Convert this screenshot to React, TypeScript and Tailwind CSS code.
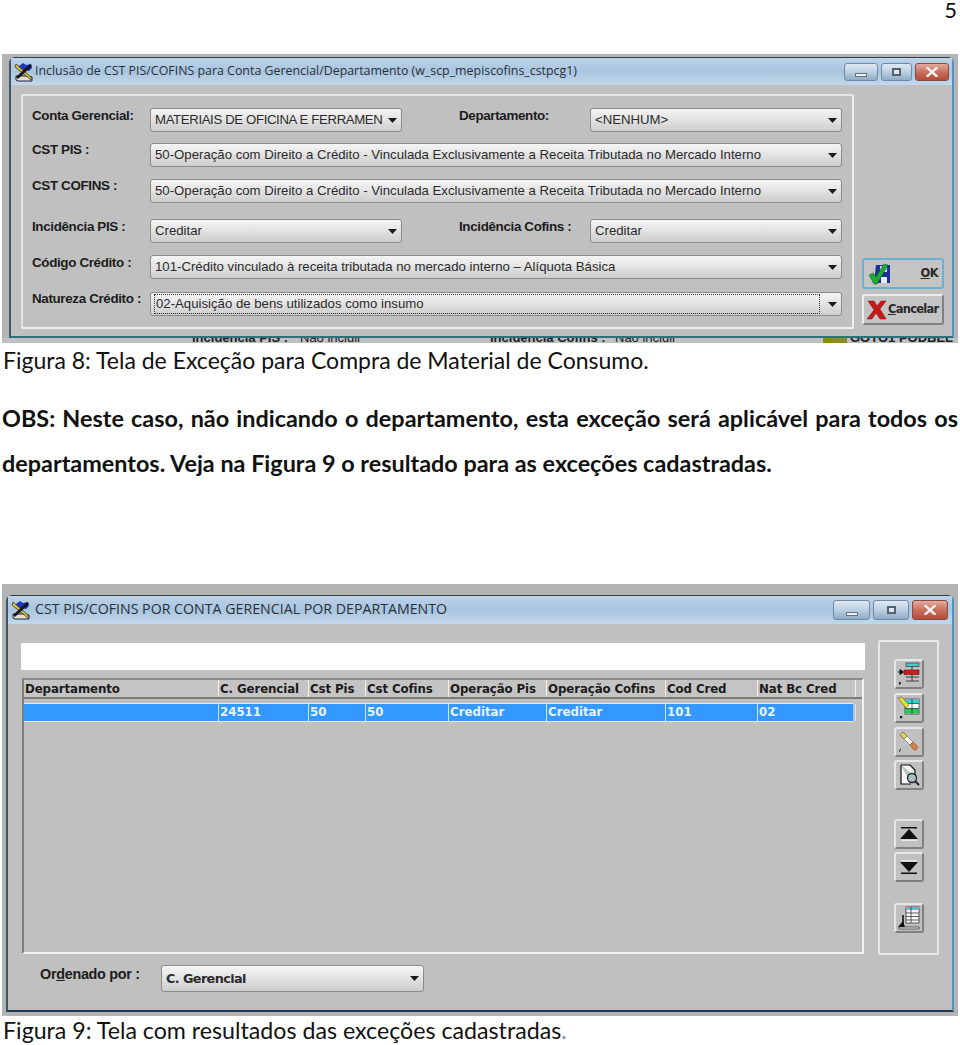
import type { ReactNode } from "react";

const ui = "font-['Liberation_Sans',Arial,sans-serif]";
const verdana = "font-['DejaVu_Sans',Verdana,sans-serif]";

function Arrow() {
  return (
    <svg width="9" height="5" viewBox="0 0 9 5" className="shrink-0">
      <path d="M0 0h9L4.5 5z" fill="#1a1a1a" />
    </svg>
  );
}

function Select({
  text,
  className,
  focused,
  bold,
  textClass,
}: {
  text: string;
  className: string;
  focused?: boolean;
  bold?: boolean;
  textClass?: string;
}) {
  return (
    <div
      className={`flex items-center justify-between h-[24px] pl-[4px] pr-[4px] rounded-[3px] border border-[#8c8c8c] bg-gradient-to-b from-[#f5f5f5] via-[#e2e2e2] to-[#cdcdcd] ${className}`}
    >
      <span
        className={`flex-1 whitespace-nowrap leading-[18px] text-[#2b2b2b] ${
          bold ? `${verdana} font-bold text-[12.8px] tracking-[-0.6px]` : "text-[13.2px]"
        } ${focused ? "border border-dotted border-[#333] mr-[8px] -ml-[1px] pl-[1px]" : ""} ${textClass ?? ""}`}
      >
        {text}
      </span>
      <Arrow />
    </div>
  );
}

function Label({ children, className }: { children: ReactNode; className: string }) {
  return (
    <span className={`font-bold text-[13.4px] leading-[16px] tracking-[-0.35px] text-[#1c1c1c] whitespace-nowrap ${className}`}>
      {children}
    </span>
  );
}

function AppIcon() {
  return (
    <svg width="20" height="20" viewBox="0 0 20 20" className="shrink-0">
      <path d="M5 4l4-3 3 2 5-1 1 4-3 3-4-1-3 1-3-2z" fill="#1f35c4" />
      <path d="M2 14h12l4 1v4H4l-2-1z" fill="#e6e2cc" stroke="#1a2036" strokeWidth="1" />
      <path d="M2 2l16 14-1 2L1 5z" fill="#d9bf2a" stroke="#222" strokeWidth="0.7" />
      <path d="M16 2l2 2L4 17l-2-2z" fill="#181818" />
    </svg>
  );
}

function WinControls({ min, max, close, h }: { min: string; max: string; close: string; h: string }) {
  return (
    <div className="flex gap-[3px]">
      <div className={`${min} ${h} flex items-end justify-center pb-[3px] rounded-[3px] border border-[#6f8ba6] bg-gradient-to-b from-[#dfe9f3] via-[#bcd0e3] to-[#8fabc4]`}>
        <div className="w-[12px] h-[4px] bg-[#eef2f5] border border-[#66737f]" />
      </div>
      <div className={`${max} ${h} flex items-center justify-center rounded-[3px] border border-[#6f8ba6] bg-gradient-to-b from-[#dfe9f3] via-[#bcd0e3] to-[#8fabc4]`}>
        <div className="w-[9px] h-[8px] border-2 border-[#55626e] bg-[#dfe6ec]" />
      </div>
      <div className={`${close} ${h} flex items-center justify-center rounded-[3px] border border-[#8a4a40] bg-gradient-to-b from-[#e5a99c] via-[#c8705e] to-[#b54a36]`}>
        <svg width="14" height="10" viewBox="0 0 14 10">
          <path d="M2.5 1l9 8M11.5 1l-9 8" stroke="#f0f0f0" strokeWidth="2.4" strokeLinecap="square" />
        </svg>
      </div>
    </div>
  );
}

function Titlebar({
  title,
  className,
  titleClass,
  controls,
}: {
  title: string;
  className: string;
  titleClass: string;
  controls: ReactNode;
}) {
  return (
    <div className={`flex items-center justify-between bg-gradient-to-b from-[#bcd3e8] via-[#a9c5df] to-[#c2d8ea] ${className}`}>
      <div className="flex items-center">
        <AppIcon />
        <span className={`font-['Open_Sans',sans-serif] text-[#2a3038] whitespace-nowrap ${titleClass}`}>{title}</span>
      </div>
      {controls}
    </div>
  );
}

function ToolButton({ children, className }: { children: ReactNode; className: string }) {
  return (
    <div className={`w-[30px] h-[30px] flex items-center justify-center rounded-[3px] border-2 border-t-[#e6e6e6] border-l-[#e6e6e6] border-r-[#808080] border-b-[#808080] bg-[#c0c0c0] ${className}`}>
      {children}
    </div>
  );
}

function FirstWindow() {
  return (
    <div className="mx-[2px] h-[289px] bg-[#b4b4b4] pt-[3px] pl-[7px] flex flex-col overflow-hidden">
      <div className="w-[945px] h-[281px] shrink-0 flex flex-col bg-[#c0c0c0] border-t border-l-2 border-r-2 border-b-2 border-t-[#33404c] border-l-[#3c5568] border-r-[#4f93c4] border-b-[#2e6f80] rounded-t-[6px]">
        <Titlebar
          title="Inclusão de CST PIS/COFINS para Conta Gerencial/Departamento (w_scp_mepiscofins_cstpcg1)"
          className="h-[27px] pl-[3px] pr-[3px]"
          titleClass="text-[12.4px] ml-[1px]"
          controls={<WinControls min="w-[34px]" max="w-[31px]" close="w-[34px]" h="h-[18px]" />}
        />
        <div className="flex flex-1 pl-[10px] pt-[9px]">
          <div className="w-[833px] h-[235px] shrink-0 border-2 border-t-[#e4e4e4] border-l-[#e4e4e4] border-b-[#f0f0f0] border-r-[#f0f0f0] rounded-[2px] pl-[9px]">
            <div className="flex items-start mt-[12px]">
              <Label className="w-[118px]">Conta Gerencial:</Label>
              <Select text="MATERIAIS DE OFICINA E FERRAMEN" className="w-[252px]" textClass="tracking-[-0.36px]" />
              <Label className="w-[131px] ml-[57px]">Departamento:</Label>
              <Select text="<NENHUM>" className="w-[252px]" />
            </div>
            <div className="flex items-start mt-[11px]">
              <Label className="w-[118px] -mt-[1px]">CST PIS :</Label>
              <Select text="50-Operação com Direito a Crédito - Vinculada Exclusivamente a Receita Tributada no Mercado Interno" className="w-[692px]" />
            </div>
            <div className="flex items-start mt-[12px]">
              <Label className="w-[118px] -mt-[1px]">CST COFINS :</Label>
              <Select text="50-Operação com Direito a Crédito - Vinculada Exclusivamente a Receita Tributada no Mercado Interno" className="w-[692px]" />
            </div>
            <div className="flex items-start mt-[16px]">
              <Label className="w-[118px]">Incidência PIS :</Label>
              <Select text="Creditar" className="w-[252px]" />
              <Label className="w-[131px] ml-[57px]">Incidência Cofins :</Label>
              <Select text="Creditar" className="w-[252px]" />
            </div>
            <div className="flex items-start mt-[12px]">
              <Label className="w-[118px]">Código Crédito :</Label>
              <Select text="101-Crédito vinculado à receita tributada no mercado interno – Alíquota Básica" className="w-[692px]" />
            </div>
            <div className="flex items-start mt-[13px]">
              <Label className="w-[118px] -mt-[1px]">Natureza Crédito :</Label>
              <Select text="02-Aquisição de bens utilizados como insumo" className="w-[692px]" focused />
            </div>
          </div>
          <div className="ml-[8px] pt-[164px] flex flex-col gap-[5px]">
            <div className="w-[82px] h-[31px] flex items-center justify-between pl-[4px] pr-[4px] rounded-[3px] border-2 border-[#6bb0d2] bg-[#c4c4c4]">
              <svg width="24" height="22" viewBox="0 0 24 22">
                <path d="M8 2h14v18H6z" fill="#1c2f96" />
                <rect x="12" y="3" width="7" height="6" fill="#cdd6ea" />
                <rect x="13" y="14" width="6" height="6" fill="#e6eaf2" />
                <path d="M1 12l4-2 3 4 8-13 4 1-11 19H6z" fill="#22a838" stroke="#0f6a1e" strokeWidth="0.6" />
              </svg>
              <span className={`${verdana} font-bold text-[11.5px] tracking-[-0.6px] text-[#2a2a2a]`}>
                <span className="underline">O</span>K
              </span>
            </div>
            <div className="w-[82px] h-[31px] flex items-center gap-[1px] pl-[3px] rounded-[3px] border-2 border-t-[#ececec] border-l-[#ececec] border-r-[#808080] border-b-[#808080] bg-[#c4c4c4]">
              <svg width="20" height="20" viewBox="0 0 20 20" className="shrink-0">
                <path d="M1 1h6l3 5 4-5h5l-6 8 6 10h-6l-4-6-4 6H0l7-9z" fill="#c91818" stroke="#7a1010" strokeWidth="0.5" />
              </svg>
              <span className={`${verdana} font-bold text-[11.5px] tracking-[-0.75px] text-[#2a2a2a]`}>
                <span className="underline">C</span>ancelar
              </span>
            </div>
          </div>
        </div>
      </div>
      <div className="h-[5px] overflow-hidden flex text-[13px] font-bold text-[#222] leading-[13px] pl-[190px] bg-[#c0c0c0] -ml-[7px]">
        <span className="-mt-[7px] w-[108px]">Incidência PIS :</span>
        <span className="-mt-[7px] w-[190px] font-normal">Não incidir</span>
        <span className="-mt-[7px] w-[125px]">Incidência Cofins :</span>
        <span className="-mt-[7px] w-[208px] font-normal">Não incidir</span>
        <span className="w-[24px] h-[5px] bg-[#8d8a1c]" />
        <span className="-mt-[7px] ml-[3px]">GOTO1 PODBEL</span>
      </div>
    </div>
  );
}

const columns = [
  { title: "Departamento", value: "", width: "w-[195px]" },
  { title: "C. Gerencial", value: "24511", width: "w-[90px]" },
  { title: "Cst Pis", value: "50", width: "w-[57px]" },
  { title: "Cst Cofins", value: "50", width: "w-[83px]" },
  { title: "Operação Pis", value: "Creditar", width: "w-[98px]" },
  { title: "Operação Cofins", value: "Creditar", width: "w-[119px]" },
  { title: "Cod Cred", value: "101", width: "w-[92px]" },
  { title: "Nat Bc Cred", value: "02", width: "w-[98px]" },
];

function SecondWindow() {
  return (
    <div className="mx-[2px] h-[432px] bg-[#b4b4b4] pt-[11px] pl-[4px] flex flex-col overflow-hidden">
      <div className="w-[948px] h-[417px] shrink-0 flex flex-col bg-[#c0c0c0] border-t border-l-2 border-r-2 border-b-2 border-t-[#33404c] border-l-[#3c5568] border-r-[#4f93c4] border-b-[#1d3a4c] rounded-t-[6px]">
        <Titlebar
          title="CST PIS/COFINS POR CONTA GERENCIAL POR DEPARTAMENTO"
          className="h-[28px] pl-[3px] pr-[4px]"
          titleClass="text-[14.2px] ml-[4px] -mt-[2px]"
          controls={<WinControls min="w-[37px]" max="w-[36px]" close="w-[36px]" h="h-[20px]" />}
        />
        <div className="flex pl-[13px] pt-[16px]">
          <div className="w-[844px] shrink-0 pt-[3px]">
            <div className="h-[27px] bg-white" />
            <div className="mt-[8px] ml-[1px] w-[842px] h-[276px] border-2 border-t-[#8a8a8a] border-l-[#7c7c7c] border-b-[#f2f2f2] border-r-[#f2f2f2]">
              <div className="flex h-[19px] bg-[#c4c4c4] border-b-2 border-[#7c7c7c]">
                {columns.map((col) => (
                  <div
                    key={col.title}
                    className={`${col.width} shrink-0 ${verdana} font-bold text-[11.8px] leading-[18px] tracking-[-0.1px] pl-[1px] border-r border-[#eeeeee] text-[#1b1b1b] whitespace-nowrap overflow-hidden`}
                  >
                    {col.title}
                  </div>
                ))}
              </div>
              <div className="flex h-[19px] mt-[4px] w-[829px] bg-[#3399ff] border-y border-[#dfeaf5]">
                {columns.map((col) => (
                  <div
                    key={col.title}
                    className={`${col.width} shrink-0 ${verdana} font-bold text-[11.8px] leading-[17px] pl-[1px] border-r border-[#cfe4fa] text-[#e8f2ff] whitespace-nowrap overflow-hidden`}
                  >
                    {col.value}
                  </div>
                ))}
              </div>
            </div>
          </div>
          <div className="ml-[13px] w-[61px] h-[315px] flex flex-col items-center pt-[17px] border-2 border-[#e8e8e8] rounded-[2px]">
            <ToolButton className="">
              <svg width="24" height="24" viewBox="0 0 24 24">
                <rect x="9" y="1" width="13" height="3.5" fill="#49c9c9" stroke="#222" strokeWidth="0.6" />
                <path d="M15 4v15M9 15h13M9 19h13" stroke="#222" strokeWidth="0.8" fill="none" />
                <path d="M1 10h3M3 7.5l3.5 2.5L3 12.5z" fill="#111" stroke="#111" />
                <rect x="7" y="8" width="15" height="4.5" fill="#c91f1f" stroke="#5d0c0c" strokeWidth="0.6" />
                <rect x="2" y="20" width="1.6" height="2.5" fill="#111" />
              </svg>
            </ToolButton>
            <ToolButton className="mt-[4px]">
              <svg width="24" height="24" viewBox="0 0 24 24">
                <rect x="8" y="3" width="14" height="15" fill="#fff" stroke="#222" strokeWidth="0.7" />
                <rect x="8" y="3" width="14" height="4" fill="#49c9c9" />
                <rect x="8" y="12.5" width="14" height="5" fill="#2fc154" />
                <path d="M8 7.5h14M8 12.5h14M15 3v15" stroke="#222" strokeWidth="0.7" />
                <path d="M1 2l4-1 7 8-3 3z" fill="#efe024" stroke="#333" strokeWidth="0.5" />
                <rect x="3" y="20" width="2.2" height="2.2" fill="#111" />
              </svg>
            </ToolButton>
            <ToolButton className="mt-[4px]">
              <svg width="24" height="24" viewBox="0 0 24 24">
                <path d="M3 5l3-3 4 4-3 3z" fill="#e6d43a" stroke="#333" strokeWidth="0.5" />
                <path d="M7 9l3-3 6 6-3 3z" fill="#f4f4f4" stroke="#555" strokeWidth="0.5" />
                <path d="M13 15l3-3 4 4a2.5 2.5 0 0 1-4 3z" fill="#d9824a" stroke="#703a14" strokeWidth="0.5" />
                <path d="M3 22c-1-1 0-3 1-3" fill="none" stroke="#222" strokeWidth="1" />
              </svg>
            </ToolButton>
            <ToolButton className="mt-[3px]">
              <svg width="24" height="24" viewBox="0 0 24 24">
                <path d="M4 2h9l5 5v6M4 2v19h10" fill="#f6f6f6" stroke="#111" strokeWidth="1.2" />
                <circle cx="15" cy="15" r="4.5" fill="#a8c0c0" stroke="#222" strokeWidth="1.3" />
                <path d="M18 18l4 4" stroke="#222" strokeWidth="2" />
              </svg>
            </ToolButton>
            <ToolButton className="mt-[29px]">
              <svg width="18" height="14" viewBox="0 0 18 14">
                <path d="M1 0h16v1.5H1zM9 2l9 10H0z" fill="#111" />
                <path d="M1 12.5h16V14H1z" fill="#e8e8e8" />
              </svg>
            </ToolButton>
            <ToolButton className="mt-[3px]">
              <svg width="18" height="14" viewBox="0 0 18 14">
                <path d="M1 12.5h16V14H1zM9 12L0 2h18z" fill="#111" />
                <path d="M1 0h16v1.5H1z" fill="#e8e8e8" />
              </svg>
            </ToolButton>
            <ToolButton className="mt-[21px]">
              <svg width="24" height="24" viewBox="0 0 24 24">
                <rect x="9" y="1" width="13" height="16" fill="#f6f6f6" stroke="#222" strokeWidth="0.7" />
                <rect x="9" y="1" width="13" height="3" fill="#49c9c9" />
                <path d="M9 7h13M9 10.5h13M9 14h13M14 1v16" stroke="#222" strokeWidth="0.7" />
                <path d="M6 9v10" stroke="#111" strokeWidth="1.6" />
                <path d="M1 21l5-6 2 6z" fill="#111" />
                <path d="M2 21h20v2H2z" fill="#e8e8e8" stroke="#222" strokeWidth="0.7" />
              </svg>
            </ToolButton>
          </div>
        </div>
        <div className="flex items-center pl-[32px] mt-[10px]">
          <span className="w-[121px] font-bold text-[14.4px] tracking-[-0.3px] text-[#1c1c1c] -mt-[7px]">
            Or<span className="underline">d</span>enado por :
          </span>
          <Select text="C. Gerencial" className="w-[263px] h-[27px]" bold />
        </div>
      </div>
    </div>
  );
}

export default function App() {
  return (
    <div className="w-[960px] h-[1045px] overflow-hidden bg-white font-['Lato',sans-serif] text-[#111]">
      <div className="h-[54px] text-right pr-[3px] text-[22px] leading-[20px]">5</div>
      <div className={ui}>
        <FirstWindow />
      </div>
      <p className="ml-[3px] mt-[4px] text-[23px] leading-[26px] whitespace-nowrap">
        Figura 8: Tela de Exceção para Compra de Material de Consumo.
      </p>
      <p className="mx-[2px] mt-[23px] text-[23.4px] leading-[45px] font-bold text-justify">
        OBS: Neste caso, não indicando o departamento, esta exceção será aplicável para todos os departamentos. Veja na Figura 9 o resultado para as exceções cadastradas.
      </p>
      <div className={`mt-[98px] ${ui}`}>
        <SecondWindow />
      </div>
      <p className="ml-[3px] text-[23.2px] leading-[28px] whitespace-nowrap">
        Figura 9: Tela com resultados das exceções cadastradas<span className="text-[#8a8a8a]">.</span>
      </p>
    </div>
  );
}
